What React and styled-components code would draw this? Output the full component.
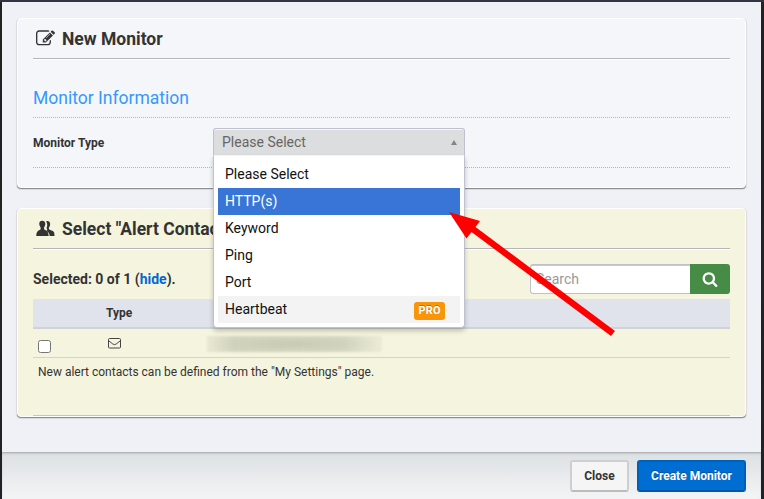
import React from "react";
import styled, { createGlobalStyle } from "styled-components";

const GlobalStyle = createGlobalStyle`
  * { box-sizing: border-box; }
  body {
    margin: 0;
    overflow: hidden;
    background: #26262b;
    color: #333;
    font: 12px/18px Roboto, "Liberation Sans", sans-serif;
  }
  button, input { font-family: inherit; }
`;

const Page = styled.div`
  position: relative;
  height: 499px;
  padding: 2px 3px 0 2px;
  background: linear-gradient(#35333f 2px, #222 2px, #202022 150px, #242424 50%, #202028);
`;

const Modal = styled.div`
  display: flex;
  flex-direction: column;
  height: 497px;
  background: #f0f1f7;
`;

const ModalBody = styled.div`
  flex: 1;
  display: flex;
  flex-direction: column;
  gap: 20px;
  padding: 16px 15px 0;
`;

const Panel = styled.section`
  height: ${(p) => p.$height}px;
  padding: 0 15px;
  border: 1px solid #fff;
  border-radius: 4px;
  background: ${(p) => p.$fill};
  box-shadow: 0 1px 1px rgba(0, 0, 0, 0.35), 0 1px 2px rgba(0, 0, 0, 0.2);
`;

const PanelHeading = styled.h2`
  display: flex;
  align-items: center;
  gap: 7px;
  height: 40px;
  margin: 0;
  padding-left: 3px;
  border-bottom: 1px solid #b5b6bb;
  box-shadow: 0 1px 0 #fff;
  font-size: 17.5px;
  font-weight: 700;
  white-space: nowrap;
`;

const HeadingIcon = styled.svg`
  width: 19px;
  height: 19px;
  fill: #333;
`;

const SectionTitle = styled.h3`
  height: 59px;
  margin: 0;
  padding-top: 27px;
  border-bottom: 1px dotted #b4b5ba;
  color: #3598fe;
  font-size: 17.5px;
  line-height: 24px;
  font-weight: 400;
`;

const FormRow = styled.div`
  display: flex;
  height: 50px;
  padding-top: 10px;
  border-bottom: 1px dotted #b4b5ba;
`;

const FieldLabel = styled.label`
  width: 180px;
  padding-top: 6px;
  font-weight: 700;
`;

const SelectWrap = styled.div`
  position: relative;
  width: 252px;
  height: 28px;
`;

const SelectBox = styled.div`
  display: flex;
  align-items: center;
  justify-content: space-between;
  height: 28px;
  padding: 0 7px 1px 8px;
  border: 1px solid #c0c1ce;
  border-bottom: 0;
  border-radius: 3px 3px 0 0;
  background: #dcddde;
  box-shadow: inset 0 1px #f4f5f8;
  color: #666;
  font-size: 14px;
`;

const UpCaret = styled.span`
  border: 3px solid transparent;
  border-top: 0;
  border-bottom: 5px solid #858585;
`;

const Menu = styled.ul`
  position: absolute;
  z-index: 2;
  top: 27px;
  left: 0;
  width: 252px;
  height: 173px;
  margin: 0;
  padding: 5px 4px;
  border: 1px solid #c0c1ce;
  border-top: 1px solid #f3f4f8;
  border-radius: 0 0 4px 4px;
  background: #fff;
  box-shadow: 0 3px 5px rgba(0, 0, 0, 0.22);
  list-style: none;
`;

const Option = styled.li`
  display: flex;
  align-items: center;
  justify-content: space-between;
  height: 27px;
  padding: 0 15px 2px 7px;
  background: ${(p) => (p.$active ? "#3875d7" : p.$locked ? "#f3f3f3" : "#fff")};
  color: ${(p) => (p.$active ? "#fff" : "#111")};
  font-size: 14px;
`;

const ProBadge = styled.span`
  height: 18px;
  margin-top: 5px;
  padding: 0 4px;
  border-radius: 3px;
  background: #fa9508;
  color: #fff;
  font-size: 11px;
  font-weight: 700;
  letter-spacing: 0.3px;
  text-shadow: 0 -1px rgba(0, 0, 0, 0.25);
`;

const ContactBar = styled.div`
  display: flex;
  justify-content: space-between;
  height: 50px;
  padding-top: 15px;
`;

const SelectedCount = styled.strong`
  padding-top: 6px;
  font-size: 14px;
`;

const HideLink = styled.a`
  color: #0069d6;
`;

const SearchGroup = styled.div`
  display: flex;
  width: 200px;
  height: 30px;
`;

const SearchInput = styled.input`
  width: 160px;
  padding: 0 5px;
  border: 1px solid #bfc0cc;
  border-right: 0;
  border-radius: 3px 0 0 3px;
  background: #fff;
  box-shadow: inset 0 1px #c8c9d4;
  font-size: 14px;
  &::placeholder { color: #999; }
`;

const SearchButton = styled.button`
  display: grid;
  place-items: center;
  width: 40px;
  padding: 0;
  border: 0;
  border-radius: 0 3px 3px 0;
  background: #468c47;
`;

const TableHead = styled.div`
  display: flex;
  align-items: center;
  height: 30px;
  padding-left: 73px;
  border-bottom: 2px solid #d1d2d8;
  background: #e1e3ec;
  font-weight: 700;
`;

const ContactRow = styled.div`
  display: flex;
  height: 29px;
  border-bottom: 1px solid #d0d2d8;
`;

const Checkbox = styled.input`
  width: 13px;
  height: 13px;
  margin: 11px 57px 0 5px;
`;

const EnvelopeIcon = styled.svg`
  width: 13px;
  height: 11px;
  margin-top: 9px;
`;

const RedactedContact = styled.span`
  width: 175px;
  height: 16px;
  margin: 7px 0 0 86px;
  background:
    radial-gradient(ellipse at center, rgba(150, 153, 130, 0.2), transparent 70%),
    linear-gradient(90deg, rgba(183, 186, 164, 0.2), rgba(183, 186, 164, 0.55) 15%, rgba(183, 186, 164, 0.5) 78%, rgba(183, 186, 164, 0.15));
  filter: blur(1px);
`;

const ContactNote = styled.p`
  height: 58px;
  margin: 0;
  padding: 5px 0 0 5px;
  border-bottom: 1px solid #c4c5ca;
`;

const Footer = styled.footer`
  display: flex;
  justify-content: flex-end;
  gap: 8px;
  height: 47px;
  padding: 7px 15px 0;
  border-top: 1px solid #b2b5b9;
  border-radius: 0 0 4px 4px;
  background: linear-gradient(#dce1e4, #f4f4f5);
  box-shadow: inset 0 1px 2px rgba(0, 0, 0, 0.12);
`;

const Button = styled.button`
  width: ${(p) => p.$width}px;
  height: 32px;
  padding: 0;
  border: 2px solid ${(p) => (p.$primary ? "#005fba" : "#cfcfcf")};
  border-bottom-color: ${(p) => (p.$primary ? "#0056a9" : "#bcbcbc")};
  border-radius: 3px;
  background: ${(p) => (p.$primary ? "#006dd2" : "#f5f5f5")};
  color: ${(p) => (p.$primary ? "#fff" : "#333")};
  font-size: 12px;
  font-weight: 700;
  text-shadow: ${(p) => (p.$primary ? "0 -1px rgba(0, 0, 0, 0.25)" : "none")};
`;

const Pointer = styled.svg`
  position: absolute;
  z-index: 3;
  left: 448px;
  top: 210px;
  width: 170px;
  height: 130px;
  pointer-events: none;
`;

const options = [
  { label: "Please Select" },
  { label: "HTTP(s)", active: true },
  { label: "Keyword" },
  { label: "Ping" },
  { label: "Port" },
  { label: "Heartbeat", locked: true },
];

export default function App() {
  return (
    <Page>
      <GlobalStyle />
      <Modal>
        <ModalBody>
          <Panel $height={170} $fill="#f5f6fa">
            <PanelHeading>
              <HeadingIcon viewBox="0 0 1792 1792">
                <path d="M888 1184l116-116-152-152-116 116v56h96v96h56zm440-720q-16-16-33 1l-350 350q-17 17-1 33t33-1l350-350q17-17 1-33zm80 594v190q0 119-84.5 203.5t-203.5 84.5h-832q-119 0-203.5-84.5t-84.5-203.5v-832q0-119 84.5-203.5t203.5-84.5h832q63 0 117 25 15 7 18 23 3 17-9 29l-49 49q-14 14-32 8-23-6-45-6h-832q-66 0-113 47t-47 113v832q0 66 47 113t113 47h832q66 0 113-47t47-113v-126q0-13 9-22l64-64q15-15 35-7t20 29zm-96-738l288 288-672 672h-288v-288zm444 132l-92 92-288-288 92-92q28-28 68-28t68 28l152 152q28 28 28 68t-28 68z" />
              </HeadingIcon>
              New Monitor
            </PanelHeading>
            <SectionTitle>Monitor Information</SectionTitle>
            <FormRow>
              <FieldLabel>Monitor Type</FieldLabel>
              <SelectWrap>
                <SelectBox>
                  Please Select
                  <UpCaret />
                </SelectBox>
                <Menu>
                  {options.map((o) => (
                    <Option key={o.label} $active={o.active} $locked={o.locked}>
                      {o.label}
                      {o.locked && <ProBadge>PRO</ProBadge>}
                    </Option>
                  ))}
                </Menu>
              </SelectWrap>
            </FormRow>
          </Panel>

          <Panel $height={209} $fill="#f5f5df">
            <PanelHeading>
              <HeadingIcon viewBox="0 0 19 19">
                <path d="M10.2 2.4C11 1.9 12.5 2 13.4 2.8c1 1 .9 3.2.3 4.5-.3.8-.9 1.3-.9 2 0 1.3 1 1.6 2.7 2.2 2.2.8 3 1.3 3 5.5h-4.8c-.3-2.7-1.3-4.1-3.5-4.9.6-.4 1-.8 1-1.6 0-.6-.5-.9-.7-1.5.9-1.7 1.2-4.5-.3-6.6z" />
                <path d="M6.2 1.8c2.2 0 3.3 1.3 3.1 3.5-.1 1.7-.9 2.3-1.2 3.2-.2.8-.1 1.8.5 2.2 1.4.8 4 1.2 4 6.3H.3c0-5.1 2.5-5.5 3.8-6.3.7-.4.7-1.4.4-2.2-.3-.9-1-1.5-1.2-3.2-.2-2.2.7-3.5 2.9-3.5z" />
              </HeadingIcon>
              Select "Alert Contacts"
            </PanelHeading>
            <ContactBar>
              <SelectedCount>
                Selected: 0 of 1 (<HideLink>hide</HideLink>).
              </SelectedCount>
              <SearchGroup>
                <SearchInput placeholder="Search" />
                <SearchButton aria-label="Search">
                  <svg width="16" height="16" viewBox="0 0 1792 1792" fill="#fff">
                    <path d="M1216 832q0-185-131.5-316.5t-316.5-131.5-316.5 131.5-131.5 316.5 131.5 316.5 316.5 131.5 316.5-131.5 131.5-316.5zm512 832q0 52-38 90t-90 38q-54 0-90-38l-343-342q-179 124-399 124-143 0-273.5-55.5t-225-150-150-225-55.5-273.5 55.5-273.5 150-225 225-150 273.5-55.5 273.5 55.5 225 150 150 225 55.5 273.5q0 220-124 399l343 343q37 37 37 90z" />
                  </svg>
                </SearchButton>
              </SearchGroup>
            </ContactBar>
            <TableHead>Type</TableHead>
            <ContactRow>
              <Checkbox type="checkbox" />
              <EnvelopeIcon viewBox="0 0 13 11" fill="none" stroke="#444">
                <rect x=".5" y=".5" width="12" height="9.5" rx="1" />
                <path d="M1 3l3.8 3q1.7 1.3 3.4 0L12 3" />
              </EnvelopeIcon>
              <RedactedContact />
            </ContactRow>
            <ContactNote>
              New alert contacts can be defined from the "My Settings" page.
            </ContactNote>
          </Panel>
        </ModalBody>
        <Footer>
          <Button $width={59}>Close</Button>
          <Button $width={109} $primary>Create Monitor</Button>
        </Footer>
      </Modal>
      <Pointer viewBox="448 210 170 130">
        <path d="M449 212L480 221L475.5 227L615 331L611 336L471.500 232L466.500 238.500Z" fill="#f00" />
      </Pointer>
    </Page>
  );
}
